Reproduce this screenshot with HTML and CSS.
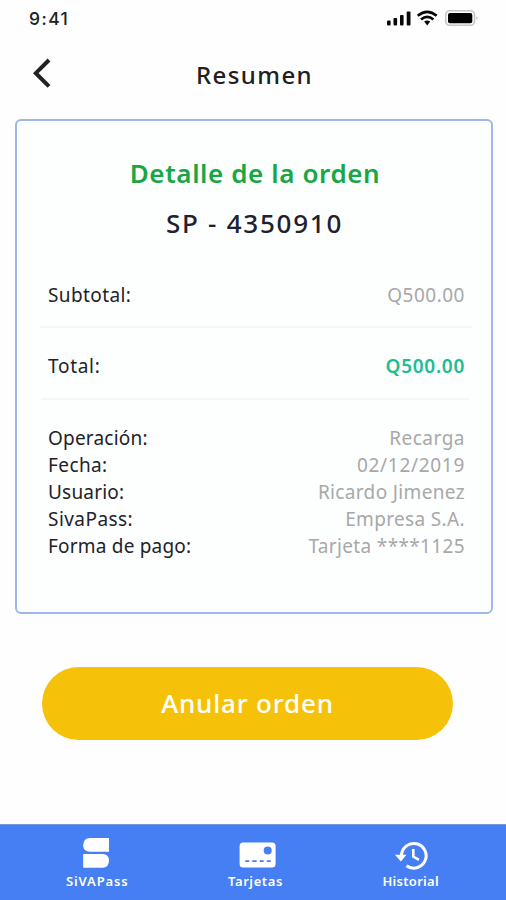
FILE: index.html
```html
<!DOCTYPE html>
<html lang="es">
<head>
<meta charset="utf-8">
<title>Resumen</title>
<link rel="stylesheet" href="styles.css">
</head>
<body>
<div class="screen">
  <div class="status">
    <span class="time">9:41</span>
    <svg class="status-icons" viewBox="0 0 94 18" width="94" height="18">
      <g fill="#080808">
        <rect x="1" y="11.5" width="3.6" height="5" rx="1"/>
        <rect x="7.5" y="9" width="3.6" height="7.5" rx="1"/>
        <rect x="14" y="6" width="3.6" height="10.5" rx="1"/>
        <rect x="20.7" y="2.5" width="3.8" height="14" rx="1"/>
        <path d="M38.2 12.6Q41.2 10.6 44.2 12.6L41.2 16.4Z"/>
      </g>
      <g fill="none" stroke="#080808" stroke-width="2.7">
        <path d="M31.7 6.8Q41.2-1 50.7 6.8"/>
        <path d="M35 10.5Q41.2 5.3 47.4 10.5"/>
      </g>
      <rect x="59.7" y="1.7" width="28.8" height="14.6" rx="4.2" fill="#fff" stroke="#c6c6c6" stroke-width="1.6"/>
      <rect x="62" y="4" width="24.3" height="10.2" rx="2" fill="#000"/>
      <path d="M90.5 7.2Q92.7 9 90.5 10.8Z" fill="#aaa"/>
    </svg>
  </div>
  <header class="header">
    <svg class="back" viewBox="0 0 24 32" width="24" height="32"><path d="M18 3 4.8 16.2 18 29.4" fill="none" stroke="#222" stroke-width="4"/></svg>
    <h1 class="title">Resumen</h1>
  </header>
  <main class="card">
    <h2 class="card-title">Detalle de la orden</h2>
    <p class="order">SP - 4350910</p>
    <div class="row subtotal"><span class="label snug">Subtotal:</span><span class="value amount">Q500.00</span></div>
    <div class="row total"><span class="label loose">Total:</span><span class="value accent">Q500.00</span></div>
    <div class="details">
      <div class="row"><span class="label tight">Operación:</span><span class="value amount">Recarga</span></div>
      <div class="row"><span class="label snug">Fecha:</span><span class="value date">02/12/2019</span></div>
      <div class="row"><span class="label tight">Usuario:</span><span class="value">Ricardo Jimenez</span></div>
      <div class="row"><span class="label">SivaPass:</span><span class="value">Empresa S.A.</span></div>
      <div class="row"><span class="label tight">Forma de pago:</span><span class="value">Tarjeta ****1125</span></div>
    </div>
  </main>
  <button class="cancel">Anular orden</button>
  <nav class="nav">
    <a class="tab tab-pass">
      <svg viewBox="0 0 32 34" width="32" height="34" fill="#fff"><path d="M9 1H28V14.8H9Q2.2 14.4 2.2 8.5Q2.2 1 9 1Z"/><path d="M2.2 17H21.5Q28 17.5 28 23.2Q28 30.3 21.5 30.8H2.2Z"/></svg>
      <span class="pass-label">SiVAPass</span>
    </a>
    <a class="tab tab-cards">
      <svg viewBox="0 0 38 34" width="38" height="34"><rect x="3.6" y="5.4" width="36" height="25" rx="3.5" fill="#fff"/><circle cx="31.7" cy="13.6" r="4" fill="#467ff3"/><path d="M9.2 24.1h25.5" stroke="#467ff3" stroke-width="1.8" stroke-dasharray="4 3.1 4.4 3"/></svg>
      <span class="cards-label">Tarjetas</span>
    </a>
    <a class="tab tab-history">
      <svg viewBox="0 0 36 34" width="36" height="34"><path d="M8.5 18.6A12.3 12.3 0 1 1 13.5 28.7" fill="none" stroke="#fff" stroke-width="3"/><path d="M2 17.8H13.5L7.9 24.6Z" fill="#fff"/><path d="M20.3 11.9V19.6L25.9 22.8" fill="none" stroke="#fff" stroke-width="2.6"/></svg>
      <span class="history-label">Historial</span>
    </a>
  </nav>
</div>
</body>
</html>
```
FILE: styles.css
```css
* { box-sizing: border-box; margin: 0; padding: 0; }
body { background: #fefefe; font-family: "Noto Sans", sans-serif; color: #222229; }
.screen { width: 506px; height: 900px; display: flex; flex-direction: column; overflow: hidden; }

.status { height: 36px; padding: 0 26px 0 29px; display: flex; justify-content: space-between; align-items: center; }
.time { font: 500 17.5px/36px Inter, sans-serif; letter-spacing: 1.4px; color: #222; padding-top: 1px; }

.header { height: 83px; padding: 21px 0 0 31px; display: grid; grid-template-columns: 24px 1fr; }
.title { padding-left: 141px; font-size: 24px; font-weight: 500; line-height: 36px; letter-spacing: 1.4px; color: #202020; }

.card { height: 494.5px; margin: 0 13px 0 15px; padding: 34px 28px 0 31px; border: 2px solid #9db8e8; border-radius: 6px; background: #fdfefe; }
.card-title { height: 36px; margin-right: 1px; font-size: 26px; font-weight: 600; line-height: 36px; letter-spacing: .6px; text-align: center; color: #19a744; }
.order { height: 36px; margin: 14px 2px 0 0; font-size: 26px; font-weight: 500; line-height: 36px; letter-spacing: 1.75px; text-align: center; color: #20202e; }
.row { display: flex; justify-content: space-between; height: 27px; margin-right: -2px; font-size: 19px; line-height: 27px; }
.subtotal, .total { border-bottom: 2px solid #f5f5f6; }
.subtotal { height: 47px; margin: 40px -9px 0 -8px; padding: 1px 7px 0 8px; }
.total { height: 72px; margin: 0 -6px 0 -7px; padding: 25px 4px 0 7px; }
.details { padding-top: 25px; }
.label { font-weight: 400; letter-spacing: .45px; }
.label.loose { letter-spacing: .7px; }
.label.snug { letter-spacing: .4px; }
.label.tight { letter-spacing: .2px; }
.value { color: #a8a8a8; letter-spacing: .35px; }
.value.amount { letter-spacing: .5px; }
.value.date { letter-spacing: .7px; }
.value.accent { font-weight: 600; letter-spacing: .7px; color: #20bd91; }

.cancel { width: 411px; height: 73px; margin: 53px 0 0 42px; flex: none; border: 0; border-radius: 37px; background: #f6c109; color: #fff; font: 500 26px/36px "Noto Sans", sans-serif; letter-spacing: .8px; }

.nav { height: 76px; margin-top: auto; display: flex; justify-content: space-between; padding: 12px 67px 0 66px; background: #467ff3; border-top: 1px solid #7598dd; }
.tab { display: flex; flex-direction: column; align-items: center; color: #fff; font-size: 13px; font-weight: 600; line-height: 18px; }
.tab svg { height: 34px; flex: none; overflow: visible; }
.tab span { padding-top: 1px; }
.pass-label { letter-spacing: .85px; }
.cards-label { letter-spacing: .6px; }
.history-label { letter-spacing: .3px; }
```
